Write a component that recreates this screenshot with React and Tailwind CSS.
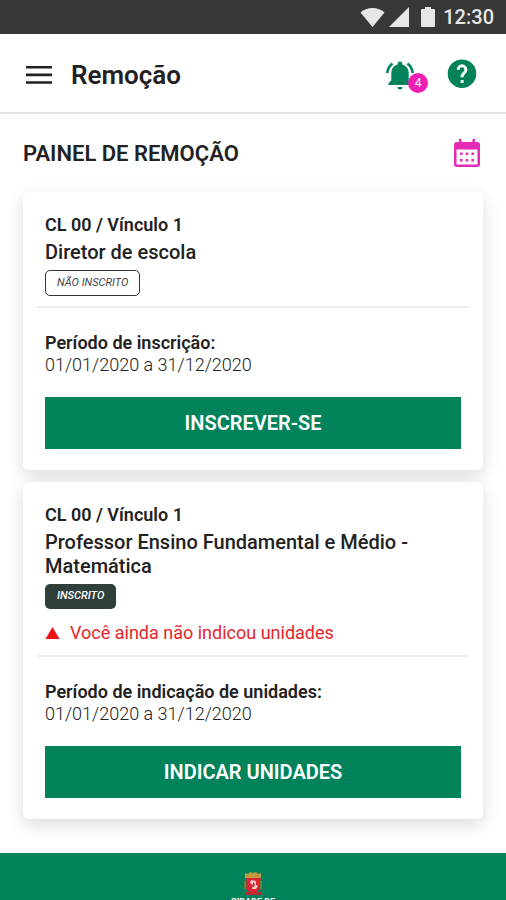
import React from "react";

const CARDS = [
  {
    id: 1,
    link: "CL 00 / Vínculo 1",
    role: "Diretor de escola",
    enrolled: false,
    periodLabel: "Período de inscrição:",
    period: "01/01/2020 a 31/12/2020",
    action: "INSCREVER-SE",
  },
  {
    id: 2,
    link: "CL 00 / Vínculo 1",
    role: "Professor Ensino Fundamental e Médio - Matemática",
    enrolled: true,
    warning: "Você ainda não indicou unidades",
    periodLabel: "Período de indicação de unidades:",
    period: "01/01/2020 a 31/12/2020",
    action: "INDICAR UNIDADES",
  },
];

function StatusBar() {
  return (
    <div className="flex h-[34px] shrink-0 items-center justify-end bg-[#383838] pr-3 text-[#e6e6e6]">
      <svg className="mr-1 h-[19px] w-[25px]" viewBox="0 0 25 19" fill="currentColor">
        <path d="M12.5 19 0.5 4.5C3.5 1.5 8 0 12.5 0s9 1.500 12 4.500z" />
      </svg>
      <svg className="mr-3 h-5 w-5" viewBox="0 0 20 20" fill="currentColor">
        <path d="M20 0v20H0z" />
      </svg>
      <svg className="mr-2 h-5 w-[14px]" viewBox="0 0 14 20" fill="currentColor">
        <path d="M4 0h6v2h3a1 1 0 0 1 1 1v16a1 1 0 0 1-1 1H1a1 1 0 0 1-1-1V3a1 1 0 0 1 1-1h3z" />
      </svg>
      <span className="text-xl font-medium">12:30</span>
    </div>
  );
}

function Header() {
  return (
    <header className="flex h-20 shrink-0 items-center border-b-2 border-[#e4e4e4] pt-1 pr-7 pl-[26px]">
      <button type="button" aria-label="Menu">
        <svg className="h-[18px] w-[26px]" viewBox="0 0 26 18" fill="#222">
          <path d="M0 0h26v2.600H0zM0 7.600h26v2.600H0zM0 15.200h26v2.600H0z" />
        </svg>
      </button>
      <h1 className="ml-[19px] flex-1 text-[26px] font-semibold">Remoção</h1>
      <button type="button" aria-label="Notificações" className="relative mr-[18px] flex w-11">
        <svg className="h-8 w-8" viewBox="0 0 32 32" fill="#00835b">
          <path d="M16 2.500a2.300 2.300 0 0 0-2.300 2.300v.8C9.800 6.600 7.300 10 7.300 14.200v7.300L4.500 24.300V26h23v-1.700l-2.800-2.800v-7.300c0-4.200-2.500-7.600-6.400-8.600v-.8A2.300 2.300 0 0 0 16 2.500zM13.500 28h5a2.500 2.500 0 0 1-5 0z" />
          <path d="M8.500 4.500C5.500 6.800 3.700 9.800 3.300 14M23.500 4.500c3 2.300 4.800 5.300 5.200 9.500" fill="none" stroke="#00835b" strokeWidth="2.600" />
        </svg>
        <span className="absolute top-[14px] right-0 flex h-5 w-5 items-center justify-center rounded-full bg-[#f01fb4] text-xs text-white">
          4
        </span>
      </button>
      <button type="button" aria-label="Ajuda">
        <svg className="h-8 w-8" viewBox="0 0 24 24" fill="#00835b">
          <circle cx="12" cy="11" r="10.700" />
          <path d="M11 18h2.200v-2.200H11zM12 4a4 4 0 0 0-4 4h2.200a1.800 1.800 0 0 1 3.600 0c0 2-2.900 2-2.900 5.700h2.200c0-2.500 2.900-2.900 2.900-5.700a4 4 0 0 0-4-4z" fill="#fff" />
        </svg>
      </button>
    </header>
  );
}

function Card({ card }) {
  return (
    <section className="rounded-md bg-white px-[14px] pt-[18px] pb-[21px] shadow-[0_6px_18px_rgba(0,0,0,0.14)]">
      <div className="px-2">
        <p className="text-lg leading-[30px] font-semibold">{card.link}</p>
        <h3 className="text-xl leading-6 font-medium">{card.role}</h3>
        {card.enrolled ? (
          <span className="mt-[6px] flex h-[25px] w-fit items-center rounded-[5px] bg-[#2f3f3a] px-3 text-[11px] font-medium text-white italic">
            INSCRITO
          </span>
        ) : (
          <span className="mt-[6px] flex h-[26px] w-fit items-center rounded-[5px] border border-[#333] px-[11px] text-[11px] text-[#444] italic">
            NÃO INSCRITO
          </span>
        )}
        {card.warning && (
          <p className="mt-3 flex items-center text-lg leading-6 text-[#e5252a]">
            <svg className="mr-[10px] h-3 w-[15px]" viewBox="0 0 14 12" fill="#f01018">
              <path d="M7 0l7 12H0z" />
            </svg>
            {card.warning}
          </p>
        )}
      </div>
      <hr className="mt-[10px] border-t-2 border-[#ececec]" />
      <div className="px-2 pt-6">
        <p className="text-lg leading-[22px] font-semibold">{card.periodLabel}</p>
        <p className="text-lg leading-[22px] font-light">{card.period}</p>
        <button type="button" className="mt-[21px] h-[52px] w-full bg-[#00835b] text-xl font-semibold text-white">
          {card.action}
        </button>
      </div>
    </section>
  );
}

function Footer() {
  return (
    <footer className="flex shrink-0 flex-col items-center bg-[#00835b] pt-[18px] pb-8 text-white">
      <svg className="h-[26px] w-5" viewBox="0 0 20 26">
        <path d="M2 2l3 1 2-2 3 1 3-1 2 2 3-1v5H2z" fill="#c29a3e" />
        <path d="M2 7h16v12H2z" fill="#8a4a38" />
        <path d="M4 7h12v9c0 4-3 6-6 7-3-1-6-3-6-7z" fill="#dd2433" />
        <path d="M1 10h2v8H1zM17 10h2v8h-2z" fill="#6d7f3c" />
        <path d="M8 9l5 1v4l2 1-2 3H9l1-4-3-2z" fill="#f0cfc9" />
        <path d="M10 11l2 2-1 3h-1z" fill="#dd2433" />
        <path d="M2 21h5l3 2 3-2h5v3H2z" fill="#b32c33" />
      </svg>
      <p className="text-center text-[9px] leading-[10px] font-bold">
        CIDADE DE
        <br />
        SÃO PAULO
      </p>
    </footer>
  );
}

export default function App() {
  return (
    <div className="flex h-screen flex-col overflow-hidden bg-white font-['Roboto',sans-serif] text-[#222]">
      <StatusBar />
      <Header />
      <main className="shrink-0 px-[23px] pt-[23px] pb-[34px]">
        <div className="mb-[23px] flex h-8 items-center justify-between">
          <h2 className="text-[22px] font-semibold">PAINEL DE REMOÇÃO</h2>
          <button type="button" aria-label="Calendário" className="mr-[3px]">
            <svg className="h-7 w-[26px]" viewBox="0 0 26 28" fill="#e52bb5">
              <path d="M5 0h2.500v3h11V0H21v3h2a3 3 0 0 1 3 3v19a3 3 0 0 1-3 3H3a3 3 0 0 1-3-3V6a3 3 0 0 1 3-3h2zM2.500 10.500v15h21v-15z" fillRule="evenodd" />
              <path d="M6 13.500h2.600v2.600H6zM11.700 13.500h2.600v2.600h-2.600zM17.400 13.500H20v2.600h-2.600zM6 20h2.600v2.600H6zM11.700 20h2.600v2.600h-2.600zM17.400 20H20v2.600h-2.600z" />
            </svg>
          </button>
        </div>
        <div className="flex flex-col gap-3">
          {CARDS.map((card) => (
            <Card key={card.id} card={card} />
          ))}
        </div>
      </main>
      <Footer />
    </div>
  );
}
